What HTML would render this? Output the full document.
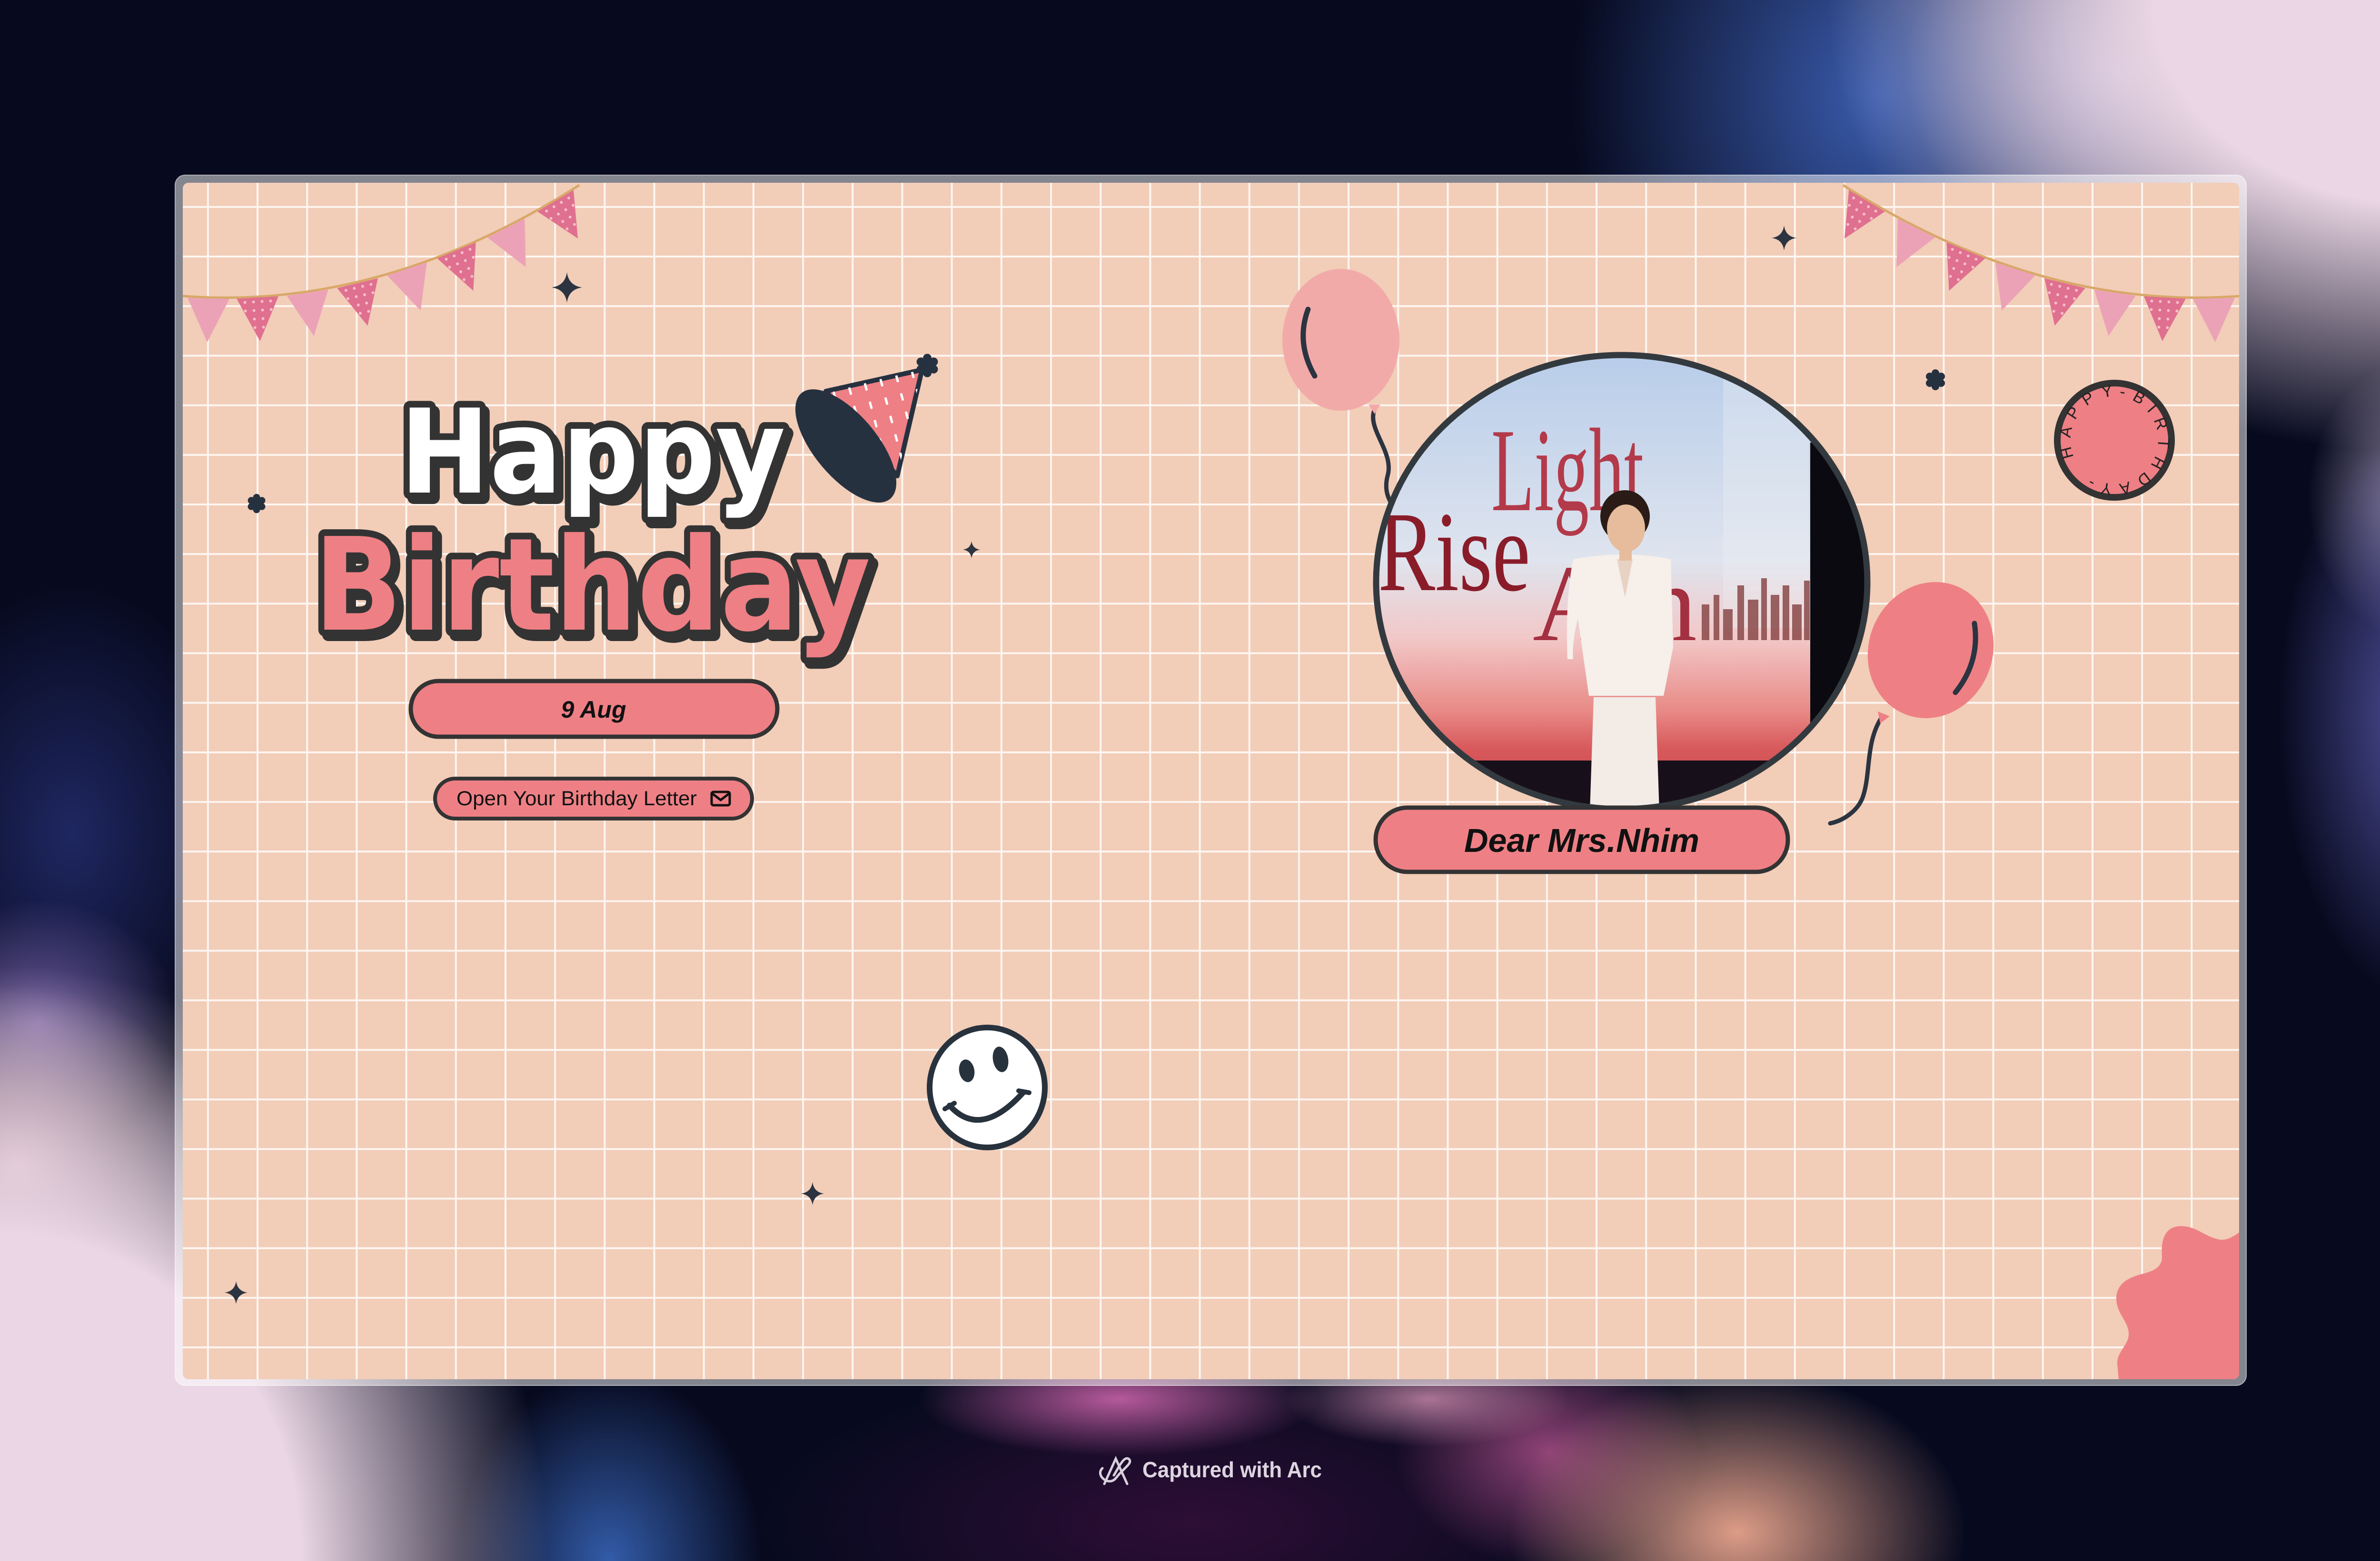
<!DOCTYPE html>
<html><head><meta charset="utf-8">
<style>
html,body{margin:0;padding:0;width:5088px;height:3280px;overflow:hidden;}
body{position:relative;font-family:"Liberation Sans",sans-serif;
background:
radial-gradient(420px 120px at 2350px 2940px, rgba(200,98,168,0.9), rgba(200,98,168,0) 100%),
radial-gradient(300px 100px at 3000px 2940px, rgba(208,140,176,0.8), rgba(208,140,176,0) 100%),
radial-gradient(1150px 1250px at 0px 3280px, #ead6e4 55%, rgba(234,214,228,0) 100%),
radial-gradient(420px 380px at 40px 2450px, rgba(232,196,204,0.9), rgba(232,196,204,0) 100%),
radial-gradient(320px 400px at 1280px 3280px, rgba(53,96,176,0.95), rgba(53,96,176,0) 100%),
radial-gradient(480px 340px at 3650px 3220px, rgba(232,164,140,0.95), rgba(232,164,140,0) 100%),
radial-gradient(320px 240px at 3250px 3050px, rgba(176,80,140,0.8), rgba(176,80,140,0) 100%),
radial-gradient(900px 330px at 2500px 3200px, rgba(50,14,56,0.9), rgba(50,14,56,0) 100%),
radial-gradient(300px 260px at 80px 2150px, rgba(138,112,184,0.8), rgba(138,112,184,0) 100%),
radial-gradient(360px 520px at 150px 1750px, rgba(34,42,104,0.9), rgba(34,42,104,0) 100%),
radial-gradient(300px 600px at 5088px 1500px, rgba(86,86,166,0.95), rgba(86,86,166,0) 100%),
radial-gradient(240px 300px at 5088px 1050px, rgba(200,184,216,0.8), rgba(200,184,216,0) 100%),
radial-gradient(1250px 950px at 5088px 0px, #ead6e4 45%, rgba(234,214,228,0) 100%),
radial-gradient(450px 400px at 4450px 150px, rgba(180,176,216,0.9), rgba(180,176,216,0) 100%),
radial-gradient(650px 750px at 3950px 200px, rgba(58,92,174,1), rgba(58,92,174,0) 100%),
#070a1f;}
svg{display:block;}
#frame{position:absolute;left:367px;top:367px;width:4353px;height:2545px;border-radius:22px;background:rgba(255,255,255,0.5);box-shadow:0 0 0 2px rgba(255,255,255,0.35) inset;}
#grid{position:absolute;left:384px;top:384px;width:4320px;height:2514px;border-radius:12px;background-color:#f2cdb8;
background-image:linear-gradient(90deg,transparent 51px,#fdf6f1 51px,#fdf6f1 55px,transparent 55px),linear-gradient(180deg,transparent 49px,#fdf6f1 49px,#fdf6f1 53px,transparent 53px);
background-size:104.2px 104.2px;overflow:hidden;}
#fg{position:absolute;left:0;top:0;overflow:hidden;}
</style></head><body>
<div id="frame"></div>
<div id="grid"></div>
<svg id="fg" width="5088" height="3280" viewBox="0 0 5088 3280">
<defs>
<pattern id="dots" patternUnits="userSpaceOnUse" width="18" height="18"><circle cx="9" cy="9" r="3" fill="#f6c0cc"/></pattern>
<pattern id="dash" patternUnits="userSpaceOnUse" width="34" height="40" patternTransform="rotate(-15)"><rect x="14" y="8" width="5" height="16" rx="2" fill="#fff"/></pattern>
<symbol id="star" viewBox="-50 -50 100 100" overflow="visible"><path d="M0,-50 Q6,-6 50,0 Q6,6 0,50 Q-6,6 -50,0 Q-6,-6 0,-50Z" fill="#2b3440"/></symbol>
<symbol id="flower" viewBox="-50 -50 100 100" overflow="visible"><g fill="#263140"><circle r="22"/><circle cx="0" cy="-28" r="16"/><circle cx="24" cy="-14" r="16"/><circle cx="24" cy="14" r="16"/><circle cx="0" cy="28" r="16"/><circle cx="-24" cy="14" r="16"/><circle cx="-24" cy="-14" r="16"/></g></symbol>
<g id="bunt">
<path d="M384,622 Q800,654 1217,389" stroke="#d8a868" stroke-width="5" fill="none"/>
<g transform="translate(438,627) rotate(1.7)"><polygon points="-44,0 44,0 0,92" fill="#eca2b6"/></g>
<g transform="translate(541,625) rotate(-3.3)"><polygon points="-44,0 44,0 0,92" fill="#e0708f"/><polygon points="-44,0 44,0 0,92" fill="url(#dots)"/></g>
<g transform="translate(646,615) rotate(-8.4)"><polygon points="-44,0 44,0 0,92" fill="#eca2b6"/></g>
<g transform="translate(751,595) rotate(-13.4)"><polygon points="-44,0 44,0 0,92" fill="#e0708f"/><polygon points="-44,0 44,0 0,92" fill="url(#dots)"/></g>
<g transform="translate(855,565) rotate(-18.1)"><polygon points="-44,0 44,0 0,92" fill="#eca2b6"/></g>
<g transform="translate(959,526) rotate(-22.6)"><polygon points="-44,0 44,0 0,92" fill="#e0708f"/><polygon points="-44,0 44,0 0,92" fill="url(#dots)"/></g>
<g transform="translate(1063,479) rotate(-26.8)"><polygon points="-44,0 44,0 0,92" fill="#eca2b6"/></g>
<g transform="translate(1167,422) rotate(-30.7)"><polygon points="-44,0 44,0 0,92" fill="#e0708f"/><polygon points="-44,0 44,0 0,92" fill="url(#dots)"/></g>
</g>
<clipPath id="pc"><ellipse cx="3407" cy="1223" rx="512" ry="473"/></clipPath>
<linearGradient id="scr" x1="0" y1="0" x2="0" y2="1">
<stop offset="0" stop-color="#b8cdea"/><stop offset="0.45" stop-color="#dfe4ee"/><stop offset="0.62" stop-color="#f2c8c8"/><stop offset="0.78" stop-color="#e88a86"/><stop offset="0.86" stop-color="#d85a5c"/><stop offset="1" stop-color="#c04048"/>
</linearGradient>
<clipPath id="card"><rect x="384" y="384" width="4320" height="2514" rx="12"/></clipPath>
</defs>

<g clip-path="url(#card)">
<use href="#bunt"/>
<g transform="matrix(-1,0,0,1,5089,0)"><use href="#bunt"/></g>
<path d="M4705,2589 C4690,2600 4675,2608 4660,2604 C4630,2598 4610,2572 4574,2577 C4545,2582 4540,2610 4542,2640 C4543,2665 4520,2672 4496,2678 C4460,2688 4446,2705 4446,2730 C4447,2760 4470,2775 4472,2800 C4474,2825 4447,2840 4448,2865 L4451,2898 L4705,2898Z" fill="#ee8085"/>
</g>

<use href="#star" x="1159" y="572" width="64" height="64"/>
<use href="#star" x="2023" y="1137" width="36" height="36"/>
<use href="#star" x="1683" y="2484" width="48" height="48"/>
<use href="#star" x="472" y="2692" width="48" height="48"/>
<use href="#star" x="3722" y="474" width="52" height="52"/>
<use href="#flower" x="516" y="1035" width="46" height="46"/>
<use href="#flower" x="4041" y="773" width="50" height="50"/>

<g font-family="'DejaVu Sans','Liberation Sans',sans-serif" font-weight="900" text-anchor="middle">
<text x="1253" y="1045" font-size="245" textLength="810" lengthAdjust="spacingAndGlyphs" fill="#333" stroke="#333" stroke-width="28" stroke-linejoin="round">Happy</text>
<text x="1245" y="1035" font-size="245" textLength="810" lengthAdjust="spacingAndGlyphs" fill="#fff" stroke="#333" stroke-width="28" stroke-linejoin="round" paint-order="stroke">Happy</text>
<text x="1252" y="1333" font-size="270" textLength="1170" lengthAdjust="spacingAndGlyphs" fill="#333" stroke="#333" stroke-width="28" stroke-linejoin="round">Birthday</text>
<text x="1244" y="1323" font-size="270" textLength="1170" lengthAdjust="spacingAndGlyphs" fill="#ee7f84" stroke="#333" stroke-width="28" stroke-linejoin="round" paint-order="stroke">Birthday</text>
</g>

<polygon points="1937,777 1735,822 1885,1000" fill="#ee7f84" stroke="#263140" stroke-width="10" stroke-linejoin="round"/>
<polygon points="1937,777 1735,822 1885,1000" fill="url(#dash)"/>
<ellipse cx="1777" cy="937" rx="145" ry="66" transform="rotate(50 1777 937)" fill="#263140"/>
<use href="#flower" x="1920" y="740" width="56" height="56"/>

<rect x="863" y="1431" width="770" height="117" rx="58" fill="#ee8085" stroke="#333" stroke-width="9"/>
<text x="1247" y="1508" font-size="50" font-weight="bold" font-style="italic" text-anchor="middle" fill="#111">9 Aug</text>
<rect x="914" y="1636" width="666" height="84" rx="42" fill="#ee8085" stroke="#333" stroke-width="8"/>
<text x="959" y="1692" font-size="43" fill="#111" textLength="505" lengthAdjust="spacingAndGlyphs">Open Your Birthday Letter</text>
<rect x="1495" y="1664" width="38" height="28" rx="4" fill="none" stroke="#111" stroke-width="5"/>
<path d="M1497,1668 L1514,1681 L1531,1668" fill="none" stroke="#111" stroke-width="5"/>

<path d="M2888,860 C2870,900 2930,950 2915,1000 C2905,1040 2925,1060 2935,1075" stroke="#2b3440" stroke-width="9" fill="none" stroke-linecap="round"/>
<ellipse cx="2817" cy="714" rx="123" ry="149" fill="#f2aaa9"/>
<polygon points="2875,850 2900,850 2888,870" fill="#f2aaa9"/>
<path d="M2748,650 Q2722,720 2762,790" stroke="#2b3440" stroke-width="11" fill="none" stroke-linecap="round"/>
<path d="M3952,1509 C3920,1560 3930,1620 3915,1670 C3905,1705 3870,1725 3845,1730" stroke="#2b3440" stroke-width="9" fill="none" stroke-linecap="round"/>
<ellipse cx="4056" cy="1366" rx="130" ry="145" transform="rotate(22 4056 1366)" fill="#ee8085"/>
<polygon points="3945,1495 3970,1505 3950,1520" fill="#ee8085"/>
<path d="M4148,1310 Q4160,1390 4108,1455" stroke="#2b3440" stroke-width="11" fill="none" stroke-linecap="round"/>

<g clip-path="url(#pc)">
<rect x="2890" y="745" width="1040" height="960" fill="url(#scr)"/>
<rect x="3803" y="930" width="127" height="680" fill="#0b0a10"/>
<rect x="2890" y="1598" width="1040" height="107" fill="#17101a"/>
<rect x="3620" y="760" width="180" height="560" fill="#eef0f4" opacity="0.35"/>
<g fill="#8a4a4a" opacity="0.85">
<rect x="3575" y="1270" width="16" height="75"/><rect x="3600" y="1250" width="12" height="95"/><rect x="3620" y="1280" width="20" height="65"/><rect x="3650" y="1230" width="14" height="115"/><rect x="3672" y="1260" width="22" height="85"/><rect x="3700" y="1215" width="12" height="130"/><rect x="3720" y="1250" width="18" height="95"/><rect x="3745" y="1230" width="14" height="115"/><rect x="3765" y="1270" width="20" height="75"/><rect x="3790" y="1220" width="12" height="125"/>
</g>
<text x="3133" y="1072" font-family="'Liberation Serif',serif" font-size="250" fill="#b33a4a" textLength="320" lengthAdjust="spacingAndGlyphs">Light</text>
<text x="2895" y="1240" font-family="'Liberation Serif',serif" font-size="240" fill="#8a1c2a" textLength="320" lengthAdjust="spacingAndGlyphs">Rise</text>
<text x="3220" y="1345" font-family="'Liberation Serif',serif" font-size="230" fill="#a33040">A</text>
<text x="3450" y="1345" font-family="'Liberation Serif',serif" font-size="230" fill="#a33040">n</text>
<path d="M3340,1705 L3348,1465 L3478,1465 L3486,1705Z" fill="#f2ebe6"/>
<path d="M3305,1175 Q3414,1155 3510,1175 L3515,1360 L3495,1462 L3338,1462 L3315,1300 Q3302,1350 3305,1385 L3293,1385 Q3288,1260 3305,1175Z" fill="#f6efea"/>
<path d="M3397,1175 L3414,1255 L3430,1175Z" fill="#e8d2c4"/>
<ellipse cx="3414" cy="1085" rx="52" ry="55" fill="#2a1b16"/>
<ellipse cx="3416" cy="1110" rx="40" ry="50" fill="#e6bc9c"/>
<rect x="3402" y="1150" width="26" height="28" fill="#e6bc9c"/>
</g>
<ellipse cx="3407" cy="1223" rx="516" ry="477" fill="none" stroke="#333a3f" stroke-width="13"/>

<rect x="2890" y="1697" width="866" height="135" rx="67" fill="#ee8085" stroke="#333" stroke-width="9"/>
<text x="3323" y="1790" font-size="70" font-weight="bold" font-style="italic" text-anchor="middle" fill="#111">Dear Mrs.Nhim</text>

<circle cx="4442" cy="925" r="120" fill="#ee7f84" stroke="#333" stroke-width="14"/>
<path id="sp" d="M4442,925 m-85,35 a92,92 0 1,1 170,0 a92,92 0 0,1 -170,0" fill="none"/>
<text font-size="34" fill="#222"><textPath href="#sp" textLength="520" lengthAdjust="spacing">HAPPY-BIRTHDAY-</textPath></text>

<ellipse cx="2074" cy="2285" rx="121" ry="126" fill="#fff" stroke="#27323d" stroke-width="12"/>
<ellipse cx="2031" cy="2250" rx="16" ry="24" fill="#27323d" transform="rotate(-10 2031 2250)"/>
<ellipse cx="2102" cy="2226" rx="16" ry="27" fill="#27323d" transform="rotate(-10 2102 2226)"/>
<path d="M1995,2323 Q2060,2395 2150,2295" fill="none" stroke="#27323d" stroke-width="12" stroke-linecap="round"/>
<path d="M1985,2330 L2005,2318 M2140,2292 L2162,2296" stroke="#27323d" stroke-width="10" stroke-linecap="round"/>

<g fill="none" stroke="#d8d0dc" stroke-width="5" stroke-linecap="round">
<path d="M2320,3118 L2344,3065 L2368,3118"/>
<path d="M2316,3085 C2300,3100 2330,3125 2345,3105 C2360,3085 2380,3075 2372,3066 C2362,3058 2352,3080 2340,3100"/>
</g>
<text x="2400" y="3104" font-size="46" font-weight="bold" fill="#ddd5e0" textLength="377" lengthAdjust="spacingAndGlyphs">Captured with Arc</text>
</svg>
</body></html>
